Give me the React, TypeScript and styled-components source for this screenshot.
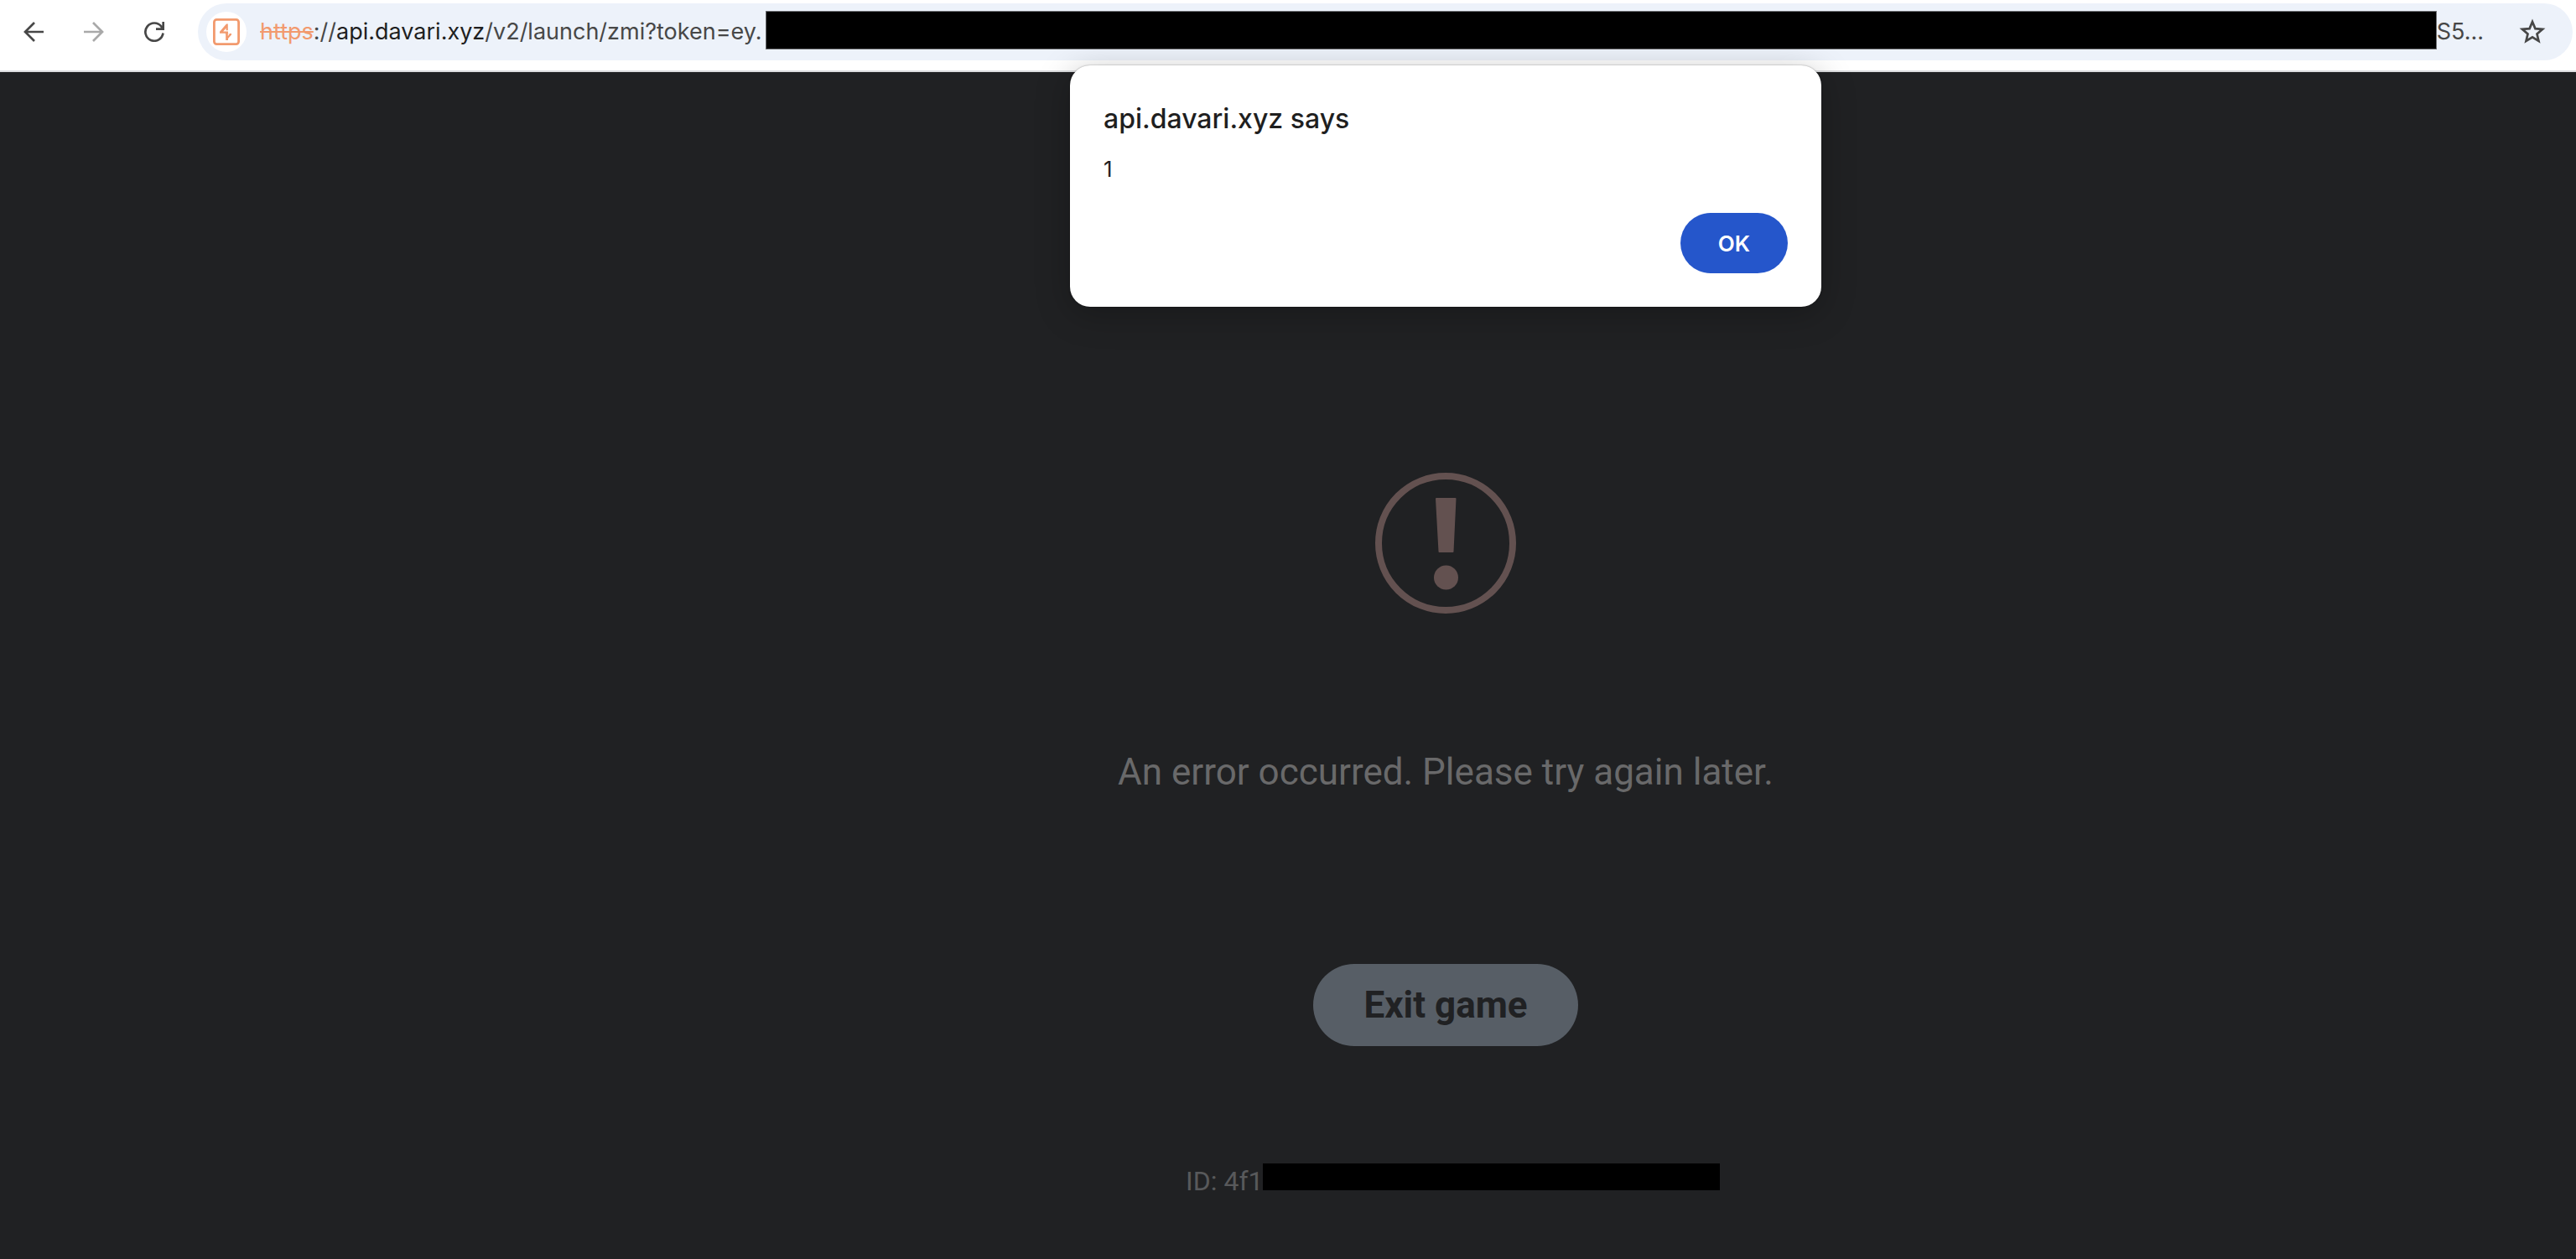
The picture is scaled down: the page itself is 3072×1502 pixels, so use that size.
import React from "react";
import styled, { createGlobalStyle } from "styled-components";

const GlobalStyle = createGlobalStyle`
  *, *::before, *::after { box-sizing: border-box; }
  html, body, #root { height: 100%; }
  body { margin: 0; background: #202123; overflow: hidden; }
  button, input { font: inherit; border: 0; padding: 0; margin: 0; }
`;

const Browser = styled.div`
  display: flex;
  flex-direction: column;
  min-height: 100%;
  font-family: Inter, "Liberation Sans", sans-serif;
`;

const Toolbar = styled.header`
  display: flex;
  align-items: center;
  gap: 32px;
  padding: 4px 4px 12px 20px;
  background: #fff;
  border-bottom: 2px solid #dcdddf;
`;

const NavButton = styled.button<{ $muted?: boolean }>`
  display: flex;
  align-items: center;
  justify-content: center;
  width: 40px;
  height: 40px;
  background: none;
  color: ${(p) => (p.$muted ? "#a9a9a9" : "#474747")};
`;

const AddressBar = styled.div`
  flex: 1;
  display: flex;
  align-items: center;
  min-width: 0;
  height: 68px;
  padding: 0 28px 0 10px;
  border-radius: 34px;
  background: #edf2fa;
`;

const SiteBadge = styled.span`
  display: flex;
  align-items: center;
  justify-content: center;
  width: 48px;
  height: 48px;
  margin-right: 16px;
  border-radius: 50%;
  background: #fff;
`;

const Url = styled.div`
  flex: 1;
  display: flex;
  align-items: center;
  min-width: 0;
  font-size: 27px;
  line-height: 44px;
  color: #474747;
  white-space: nowrap;
`;

const Scheme = styled.span`
  color: #f29a6e;
  text-decoration: line-through;
`;

const Host = styled.span`
  color: #1f1f1f;
`;

const UrlRedaction = styled.span`
  flex: 1;
  height: 46px;
  margin: 0 0 4px 4px;
  background: #000;
  border: 1px solid #6c6e71;
`;

const UrlTail = styled.span`
  margin-right: 38px;
`;

const Page = styled.main`
  position: relative;
  flex: 1;
  display: flex;
  flex-direction: column;
  align-items: center;
  padding: 478px 0 0 376px;
  background: #202123;
  font-family: Roboto, "Liberation Sans", sans-serif;
`;

const Message = styled.p`
  margin: 160px 0 0;
  font-size: 44px;
  line-height: 58px;
  color: #69696a;
`;

const ExitButton = styled.button`
  && {
    margin-top: 200px;
    padding: 0 60px;
    height: 98px;
    border-radius: 49px;
    background: #575e66;
    color: #202123;
    font-size: 44px;
    font-weight: 700;
  }
`;

const IdRow = styled.div`
  display: flex;
  align-items: center;
  width: 620px;
  margin-top: 138px;
  font-size: 32px;
  line-height: 46px;
  color: #58595b;
  white-space: nowrap;
`;

const IdRedaction = styled.span`
  flex: none;
  width: 545px;
  height: 32px;
  margin-bottom: 10px;
  background: #000;
`;

const DialogLayer = styled.div`
  position: absolute;
  inset: -8px 0 auto 376px;
  display: flex;
  justify-content: center;
`;

const Dialog = styled.section`
  width: 896px;
  padding: 40px;
  border-radius: 24px;
  background: #fff;
  color: #1f1f1f;
  font-family: Inter, "Liberation Sans", sans-serif;
  box-shadow: 0 0 2px rgba(0, 0, 0, 0.4), 0 8px 40px rgba(0, 0, 0, 0.25);
`;

const DialogTitle = styled.h1`
  margin: 0;
  font-size: 32px;
  line-height: 48px;
  font-weight: 500;
`;

const DialogText = styled.p`
  margin: 16px 0 0;
  font-size: 26px;
  line-height: 40px;
`;

const DialogActions = styled.div`
  display: flex;
  justify-content: flex-end;
  margin-top: 32px;
`;

const OkButton = styled.button`
  && {
    width: 128px;
    height: 72px;
    border-radius: 36px;
    background: #2556cb;
    color: #fff;
    font-size: 26px;
    font-weight: 600;
  }
`;

const BackIcon = () => (
  <svg width="24" height="24" viewBox="0 0 24 24" fill="none" stroke="currentColor" strokeWidth="2.7">
    <path d="M24 12H2M13 1L2 12L13 23" />
  </svg>
);

const ForwardIcon = () => (
  <svg width="24" height="24" viewBox="0 0 24 24" fill="none" stroke="currentColor" strokeWidth="2.7">
    <path d="M0 12H22M11 1L22 12L11 23" />
  </svg>
);

const ReloadIcon = () => (
  <svg width="24" height="24" viewBox="0 0 24 24" fill="none" stroke="currentColor" strokeWidth="2.7">
    <path d="M22.5 13.5A10.6 10.6 0 1 1 20.5 5.8L22.5 8.6M22.7 0V8.7H14" />
  </svg>
);

const SiteIcon = () => (
  <svg width="32" height="32" viewBox="0 0 32 32" fill="none">
    <rect x="1.4" y="1.4" width="29.2" height="29.2" rx="3" stroke="#f29a6e" strokeWidth="2.8" />
    <path d="M17.8 6.5V14.2H15.6V11.5L12.2 15.4H18V17.8H8V15.8L16 6.5ZM15.2 26V17.8H17.8V21L20 18.2H14V18H22V19.5L18 24V26Z" fill="#f29a6e" />
  </svg>
);

const StarIcon = () => (
  <svg width="32" height="32" viewBox="0 0 32 32" fill="none" stroke="#474747" strokeWidth="2.7">
    <path d="M16 4L19.4 12.1L28.1 12.8L21.5 18.5L23.5 27L16 22.4L8.5 27L10.5 18.5L3.9 12.8L12.6 12.1Z" />
  </svg>
);

const ErrorIcon = () => (
  <svg width="168" height="168" viewBox="0 0 168 168" fill="#635150" role="img" aria-label="Error">
    <circle cx="84" cy="84" r="80" fill="none" stroke="#635150" strokeWidth="8" />
    <path d="M73 30H95.5Q96.5 30 96.5 31L93.5 94Q93.5 95 92.5 95H76.5Q75.5 95 75.5 94L72 31Q72 30 73 30Z" />
    <circle cx="84.5" cy="125" r="14.5" />
  </svg>
);

export default function App() {
  return (
    <Browser>
      <GlobalStyle />
      <Toolbar>
        <NavButton aria-label="Back"><BackIcon /></NavButton>
        <NavButton aria-label="Forward" $muted><ForwardIcon /></NavButton>
        <NavButton aria-label="Reload"><ReloadIcon /></NavButton>
        <AddressBar>
          <SiteBadge><SiteIcon /></SiteBadge>
          <Url>
            <Scheme>https</Scheme>
            <span>://</span>
            <Host>api.davari.xyz</Host>
            <span>/v2/launch/zmi?token=ey.</span>
            <UrlRedaction />
            <UrlTail>S5...</UrlTail>
          </Url>
          <NavButton aria-label="Bookmark this tab"><StarIcon /></NavButton>
        </AddressBar>
      </Toolbar>
      <Page>
        <ErrorIcon />
        <Message>An error occurred. Please try again later.</Message>
        <ExitButton>Exit game</ExitButton>
        <IdRow>
          <span>ID: 4f1</span>
          <IdRedaction />
        </IdRow>
        <DialogLayer>
          <Dialog role="alertdialog" aria-labelledby="dialog-title">
            <DialogTitle id="dialog-title">api.davari.xyz says</DialogTitle>
            <DialogText>1</DialogText>
            <DialogActions>
              <OkButton>OK</OkButton>
            </DialogActions>
          </Dialog>
        </DialogLayer>
      </Page>
    </Browser>
  );
}
